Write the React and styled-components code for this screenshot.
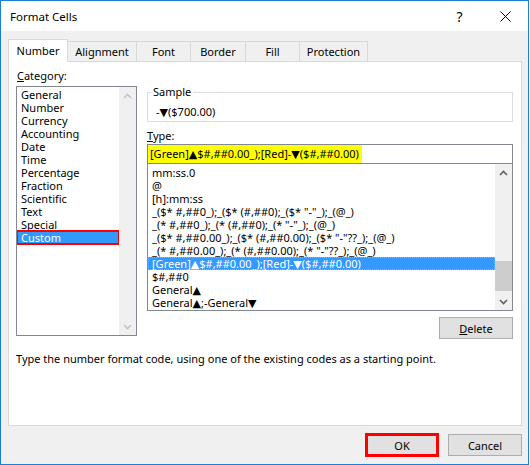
import React from 'react'
import styled, { createGlobalStyle } from 'styled-components'

const GlobalStyle = createGlobalStyle`
  body {
    margin: 0;
    font-family: "Segoe UI", "Noto Sans", "DejaVu Sans", sans-serif;
    font-size: 11px;
    color: #000;
  }
  * { box-sizing: border-box; }
`

const categories = ['General', 'Number', 'Currency', 'Accounting', 'Date', 'Time', 'Percentage', 'Fraction', 'Scientific', 'Text', 'Special', 'Custom']

const formats = [
  'mm:ss.0',
  '@',
  '[h]:mm:ss',
  '_($* #,##0_);_($* (#,##0);_($* "-"_);_(@_)',
  '_(* #,##0_);_(* (#,##0);_(* "-"_);_(@_)',
  '_($* #,##0.00_);_($* (#,##0.00);_($* "-"??_);_(@_)',
  '_(* #,##0.00_);_(* (#,##0.00);_(* "-"??_);_(@_)',
  '[Green]▲$#,##0.00_);[Red]-▼($#,##0.00)',
  '$#,##0',
  'General▲',
  'General▲;-General▼',
]

const tabs = [
  { label: 'Number', w: 60 },
  { label: 'Alignment', w: 70 },
  { label: 'Font', w: 55 },
  { label: 'Border', w: 56 },
  { label: 'Fill', w: 55 },
  { label: 'Protection', w: 69 },
]

const Window = styled.div`
    width: 529px;
    height: 465px;
    border: 1px solid #1a7fd4;
    background: #f0f0f0;
    display: flex;
    flex-direction: column;
`
const TitleBar = styled.div`
    height: 30px;
    background: #fff;
    display: flex;
    align-items: center;
    padding-left: 9px;
`
const Title = styled.div`
    flex: 1;
    font-size: 11.5px;
`
const TitleButton = styled.div`
    width: ${props => props.w}px;
    height: 30px;
    display: flex;
    align-items: center;
    justify-content: center;
    font-size: 14px;
`
const Body = styled.div`
    flex: 1;
    padding: 8px 6px 0 7px;
    display: flex;
    flex-direction: column;
`
const TabRow = styled.div`
    height: 22px;
    display: flex;
    align-items: flex-end;
`
const Tab = styled.div`
    width: ${props => props.w}px;
    height: ${props => props.active ? 23 : 20}px;
    margin-left: ${props => props.first ? 0 : -1}px;
    margin-bottom: ${props => props.active ? -1 : 0}px;
    border: 1px solid #d9d9d9;
    border-bottom: none;
    background: ${props => props.active ? '#fff' : '#f0f0f0'};
    position: relative;
    z-index: ${props => props.active ? 1 : 0};
    display: flex;
    justify-content: center;
    padding-top: ${props => props.active ? 3 : 2}px;
`
const Panel = styled.div`
    height: 365px;
    background: #fff;
    border: 1px solid #d9d9d9;
    padding: 6px 7px 0 7px;
`
const Columns = styled.div`
    display: flex;
    gap: 10px;
`
const LeftCol = styled.div`
    width: 121px;
    display: flex;
    flex-direction: column;
`
const RightCol = styled.div`
    width: 366px;
    margin-top: 16px;
    display: flex;
    flex-direction: column;
`
const Label = styled.div`
    line-height: 16px;
    margin-left: ${props => props.indent || 0}px;
    margin-top: ${props => props.mt || 0}px;
`
const U = styled.span`
    text-decoration: underline;
`
const ListBox = styled.div`
    height: ${props => props.h}px;
    margin-top: ${props => props.mt || 0}px;
    border: 1px solid #828790;
    display: flex;
    overflow: hidden;
`
const Items = styled.div`
    flex: 1;
    min-width: 0;
    overflow: hidden;
    padding-top: ${props => props.pt}px;
`
const Item = styled.div`
    height: 13px;
    line-height: 13px;
    padding-left: 4px;
    white-space: nowrap;
    background: ${props => props.selected ? '#3399ff' : 'transparent'};
    color: ${props => props.selected ? '#fff' : '#000'};
    outline: ${props => props.marked ? '2px solid #f00' : props.focus ? '1px dotted #e8a060' : 'none'};
    outline-offset: -1px;
`
const ScrollBar = styled.div`
    width: 17px;
    background: #f0f0f0;
    display: flex;
    flex-direction: column;
`
const ScrollArrow = styled.div`
    height: 17px;
    display: flex;
    align-items: center;
    justify-content: center;
`
const Track = styled.div`
    flex: 1;
    display: flex;
    flex-direction: column;
`
const Thumb = styled.div`
    margin-top: auto;
    margin-bottom: 2px;
    height: 30px;
    background: #cdcdcd;
`
const Group = styled.fieldset`
    margin: 0;
    min-width: 0;
    border: 1px solid #dcdcdc;
    padding: 4px 0 1px 8px;
`
const Legend = styled.legend`
    padding: 0 2px;
    margin-left: -5px;
    line-height: 16px;
`
const SampleValue = styled.div`
    line-height: 16px;
`
const TypeInput = styled.div`
    height: 20px;
    border: 1px solid #828790;
    display: flex;
`
const Highlight = styled.span`
    background: #ffff00;
    line-height: 18px;
    padding: 0 3px 0 2px;
    white-space: nowrap;
`
const Button = styled.div`
    width: 74px;
    height: ${props => props.primary ? 24 : 22}px;
    background: #e1e1e1;
    border: ${props => props.primary ? '3px solid #f00' : '1px solid #adadad'};
    display: flex;
    align-items: center;
    justify-content: center;
    align-self: ${props => props.end ? 'flex-end' : 'auto'};
    margin-top: ${props => props.mt || 0}px;
`
const Hint = styled.div`
    margin-top: 12px;
    line-height: 16px;
`
const Footer = styled.div`
    display: flex;
    justify-content: flex-end;
    align-items: center;
    gap: 9px;
    padding-top: 7px;
`

const Chevron = ({ up, color }) => (
  <svg width="9" height="6" viewBox="0 0 9 6">
    <polyline
      points={up ? '1,5 4.5,1.5 8,5' : '1,1 4.5,4.5 8,1'}
      fill="none"
      stroke={color}
      strokeWidth="1.6"
    />
  </svg>
)

const Scroll = ({ disabled, thumb }) => {
  const color = disabled ? '#c4c4c4' : '#606060'
  return (
    <ScrollBar>
      <ScrollArrow><Chevron up color={color} /></ScrollArrow>
      <Track>{thumb && <Thumb />}</Track>
      <ScrollArrow><Chevron color={color} /></ScrollArrow>
    </ScrollBar>
  )
}

const App = () => {
  return (
    <Window>
      <GlobalStyle />
      <TitleBar>
        <Title>Format Cells</Title>
        <TitleButton w={45}>?</TitleButton>
        <TitleButton w={46}>
          <svg width="11" height="11" viewBox="0 0 11 11">
            <path d="M0.5 0.5 L10.5 10.5 M10.5 0.5 L0.5 10.5" stroke="#000" strokeWidth="1" />
          </svg>
        </TitleButton>
      </TitleBar>
      <Body>
        <TabRow>
          {tabs.map((t, i) => (
            <Tab key={t.label} w={t.w} first={i === 0} active={i === 0}>{t.label}</Tab>
          ))}
        </TabRow>
        <Panel>
          <Columns>
            <LeftCol>
              <Label indent={1}><U>C</U>ategory:</Label>
              <ListBox h={250} mt={2}>
                <Items pt={1}>
                  {categories.map(c => (
                    <Item key={c} selected={c === 'Custom'} marked={c === 'Custom'}>{c}</Item>
                  ))}
                </Items>
                <Scroll disabled />
              </ListBox>
            </LeftCol>
            <RightCol>
              <Group>
                <Legend>Sample</Legend>
                <SampleValue>-▼($700.00)</SampleValue>
              </Group>
              <Label mt={6}><U>T</U>ype:</Label>
              <TypeInput>
                <Highlight>[Green]▲$#,##0.00_);[Red]-▼($#,##0.00)</Highlight>
              </TypeInput>
              <ListBox h={148} mt={-1}>
                <Items pt={2}>
                  {formats.map((f, i) => (
                    <Item key={i} selected={i === 7} focus={i === 7}>{f}</Item>
                  ))}
                </Items>
                <Scroll thumb />
              </ListBox>
              <Button end mt={6}><span><U>D</U>elete</span></Button>
            </RightCol>
          </Columns>
          <Hint>Type the number format code, using one of the existing codes as a starting point.</Hint>
        </Panel>
        <Footer>
          <Button primary>OK</Button>
          <Button>Cancel</Button>
        </Footer>
      </Body>
    </Window>
  )
}

export default App
